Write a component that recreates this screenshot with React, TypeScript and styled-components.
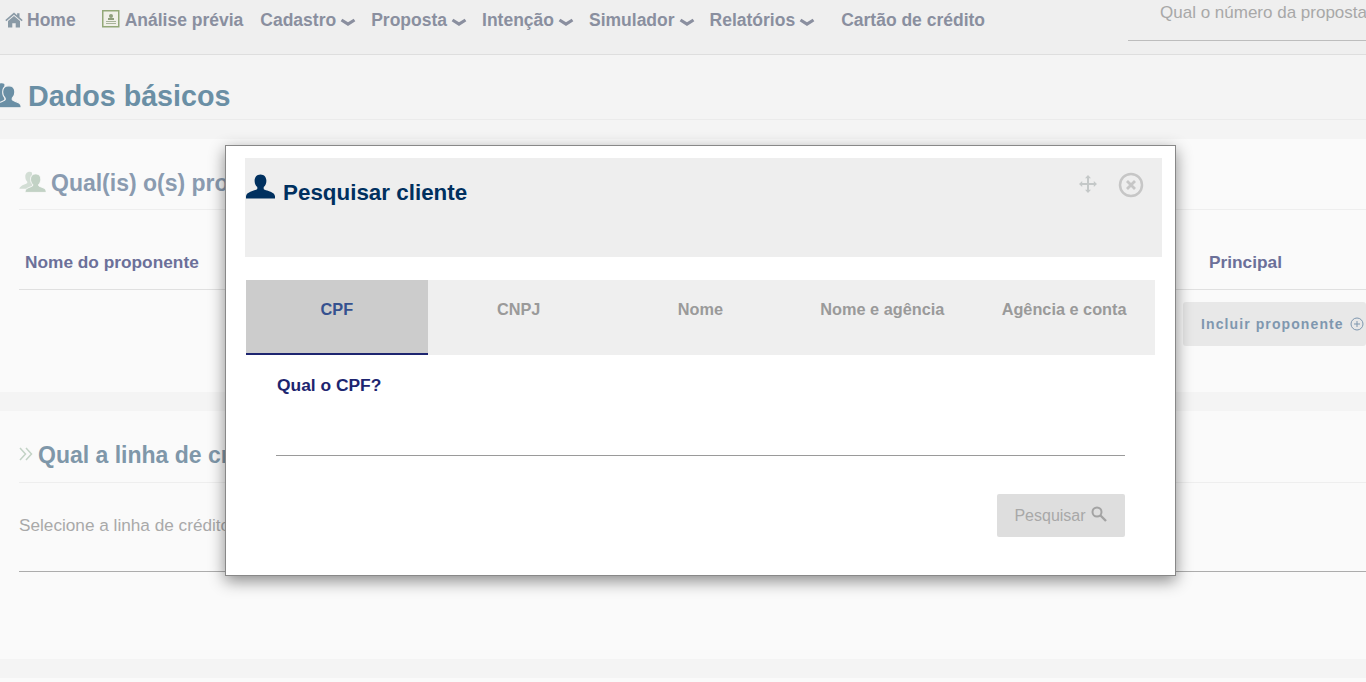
import styled, { createGlobalStyle } from 'styled-components';

const GlobalStyle = createGlobalStyle`
    html, body {
        margin: 0;
        padding: 0;
        height: 100%;
        overflow: hidden;
        background: #f4f4f4;
        font-family: "Liberation Sans", Arial, sans-serif;
    }
`;

const Page = styled.div`
    position: relative;
    width: 1366px;
    height: 682px;
    overflow: hidden;
`;

const Header = styled.header`
    display: flex;
    justify-content: space-between;
    height: 54px;
    background: #efefef;
    border-bottom: 1px solid #dedede;
`;

const Nav = styled.nav`
    display: flex;
    align-items: flex-start;
    padding: 10px 0 0 5px;
`;

const NavItem = styled.a<{ $left?: number }>`
    display: flex;
    align-items: center;
    height: 20px;
    margin-left: ${({ $left }) => $left ?? 15}px;
    color: #8a8f9f;
    font-size: 17.5px;
    font-weight: bold;
    white-space: nowrap;
    svg {
        flex: none;
    }
`;

const SearchBox = styled.div`
    box-sizing: border-box;
    width: 238px;
    height: 41px;
    padding: 4px 0 0 32px;
    border-bottom: 1px solid #bdbdbd;
    color: #a8a8a8;
    font-size: 17px;
    line-height: 18px;
    white-space: nowrap;
    overflow: hidden;
`;

const TitleBar = styled.div`
    display: flex;
    align-items: center;
    gap: 7px;
    box-sizing: border-box;
    height: 65px;
    margin-left: -11px;
    padding-top: 18px;
    border-bottom: 1px solid #ebebeb;
    color: #6a8fa5;
    font-size: 28.7px;
    font-weight: bold;
`;

const Card = styled.section<{ $height: number; $top: number }>`
    box-sizing: border-box;
    height: ${({ $height }) => $height}px;
    margin-top: ${({ $top }) => $top}px;
    padding-left: 19px;
    background: #fafafa;
`;

const CardTitle = styled.h2<{ $height: number; $color: string; $bottom: number }>`
    display: flex;
    align-items: flex-end;
    gap: 5px;
    box-sizing: border-box;
    height: ${({ $height }) => $height}px;
    margin: 0;
    padding-bottom: ${({ $bottom }) => $bottom}px;
    border-bottom: 1px solid #eeeeee;
    color: ${({ $color }) => $color};
    font-size: 23px;
    font-weight: bold;
    line-height: 26px;
    white-space: nowrap;
`;

const TableHead = styled.div`
    display: flex;
    justify-content: space-between;
    align-items: center;
    box-sizing: border-box;
    height: 80px;
    padding: 26px 84px 0 6px;
    border-bottom: 1px solid #e0e0e0;
    color: #6c7099;
    font-size: 17.3px;
    font-weight: bold;
`;

const ActionRow = styled.div`
    display: flex;
    justify-content: flex-end;
    padding-top: 12px;
`;

const IncludeButton = styled.div`
    display: flex;
    align-items: center;
    gap: 6px;
    box-sizing: border-box;
    width: 183px;
    height: 44px;
    padding-left: 18px;
    border-radius: 3px;
    background: #e8e8e8;
    color: #7f97af;
    font-size: 14px;
    font-weight: bold;
    letter-spacing: 1.1px;
    white-space: nowrap;
`;

const SelectField = styled.div`
    box-sizing: border-box;
    height: 89px;
    padding-top: 33px;
    border-bottom: 1px solid #acacac;
    color: #a9a9a9;
    font-size: 17.2px;
    line-height: 18px;
`;

const Modal = styled.div`
    position: absolute;
    left: 225px;
    top: 145px;
    box-sizing: border-box;
    width: 951px;
    height: 431px;
    padding: 12px 13px 0 19px;
    border: 1px solid #888888;
    background: #ffffff;
    box-shadow: 0 5px 15px rgba(0, 0, 0, 0.45);
`;

const ModalHeader = styled.div`
    display: flex;
    justify-content: space-between;
    align-items: flex-start;
    box-sizing: border-box;
    height: 99px;
    padding: 14px 18px 0 1px;
    background: #eeeeee;
`;

const ModalTitle = styled.h1`
    display: flex;
    align-items: flex-start;
    gap: 8px;
    margin: 0;
    padding-top: 2px;
    color: #00305f;
    font-size: 22.4px;
    font-weight: bold;
`;

const ModalTitleText = styled.span`
    margin-top: 6px;
`;

const ModalTools = styled.div`
    display: flex;
    align-items: flex-start;
    gap: 20px;
`;

const Tabs = styled.div`
    display: flex;
    width: 909px;
    margin: 23px 0 0 1px;
    background: #efefef;
`;

const Tab = styled.div<{ $active?: boolean }>`
    box-sizing: border-box;
    flex: 1;
    height: 75px;
    padding-top: 20px;
    border-bottom: 2px solid ${({ $active }) => ($active ? '#1d2570' : 'transparent')};
    background: ${({ $active }) => ($active ? '#cccccc' : 'transparent')};
    color: ${({ $active }) => ($active ? '#35518f' : '#9a9a9a')};
    font-size: 16.3px;
    font-weight: bold;
    line-height: 18px;
    text-align: center;
`;

const FieldLabel = styled.label`
    display: block;
    margin: 21px 0 0 32px;
    color: #1d2570;
    font-size: 17.4px;
    font-weight: bold;
    line-height: 18px;
`;

const FieldLine = styled.div`
    width: 849px;
    height: 1px;
    margin: 61px 0 0 31px;
    background: #9a9a9a;
`;

const ModalFooter = styled.div`
    display: flex;
    justify-content: flex-end;
    width: 880px;
    margin-top: 38px;
`;

const SearchButton = styled.div`
    display: flex;
    align-items: center;
    justify-content: center;
    gap: 5px;
    width: 128px;
    height: 43px;
    border-radius: 2px;
    background: #dedede;
    color: #a8a8a8;
    font-size: 16px;
`;

const PERSON =
    'M14.500 0.500c-3.800 0-5.900 2.900-5.900 6.300 0 2.700 1.100 5 2.700 6.300v1.900c-.4 1-6 2-8.600 3.700C.7 19.700-.1 21.100-.3 24.500h29.600c-.2-3.400-1-4.800-3-5.800-2.600-1.700-8.200-2.700-8.600-3.700v-1.900c1.600-1.300 2.700-3.600 2.700-6.300 0-3.400-2.100-6.300-5.900-6.300z';

const PersonIcon = ({ color }: { color: string }) => (
    <svg width="29" height="25" viewBox="0 0 29 25" fill={color} style={{ flex: 'none' }}>
        <path d={PERSON} />
    </svg>
);

const PeopleIcon = ({ size, back, front, edge }: { size: number; back: string; front: string; edge?: string }) => (
    <svg width={size} height={size} viewBox="0 0 30 26" style={{ flex: 'none' }}>
        <path
            fill={back}
            d="M12 1c-3.400 0-5 2.500-5 5.600 0 2.400.9 4.400 2.200 5.600v1.400c-.4.9-4.500 1.800-6.500 3.300C1.400 17.800.6 19 .4 20h14V1.800C13.700 1.300 12.900 1 12 1z"
        />
        <path
            fill={front}
            stroke={edge}
            d="M18 3.500c-3.400 0-5.200 2.600-5.200 5.800 0 2.400.9 4.600 2.400 5.800v1.500c-.4.900-5 1.900-6.800 3.300-1.100.9-1.600 2.300-1.600 4.100h23.400c0-1.800-.5-3.200-1.600-4.100-1.800-1.400-6.400-2.400-6.800-3.300v-1.500c1.500-1.200 2.400-3.400 2.400-5.800 0-3.200-1.800-5.800-5.200-5.800z"
        />
    </svg>
);

const HomeIcon = () => (
    <svg width="18" height="16" viewBox="0 0 18 16" fill="#8a9aa6" style={{ marginRight: 4 }}>
        <path d="M9 0.500 0.300 8l1 1.200L9 2.700l7.700 6.500 1-1.200L14.500 5.200V1.200h-2.400v2L9 .5z" />
        <path d="M9 4 3 9v6.500h4.300v-4.300h3.400v4.300H15V9L9 4z" />
    </svg>
);

const ReportIcon = () => (
    <svg width="18" height="18" viewBox="0 0 18 18" style={{ marginRight: 5, marginTop: -3 }}>
        <rect x="0.750" y="0.750" width="16" height="16" fill="#f0f0e8" stroke="#93a878" strokeWidth="1.500" />
        <circle cx="9" cy="6" r="2" fill="#8f9f7c" />
        <rect x="6" y="8" width="6" height="2" fill="#8f9f7c" />
        <rect x="4" y="11" width="10" height="1" fill="#a8b39a" />
        <rect x="4" y="13" width="10" height="1" fill="#a8b39a" />
    </svg>
);

const Chevron = () => (
    <svg width="16" height="9" viewBox="0 0 16 9" style={{ marginLeft: 4, marginTop: 5 }}>
        <path d="M1.500 2l6.500 4 6.500-4" fill="none" stroke="#8a8f9f" strokeWidth="3.200" />
    </svg>
);

const DoubleChevron = () => (
    <svg width="14" height="16" viewBox="0 0 14 16" fill="none" stroke="#c3d3c6" strokeWidth="1.500" style={{ marginBottom: 6 }}>
        <path d="M1 2l5.500 6L1 14M7 2l5.500 6L7 14" />
    </svg>
);

const MoveIcon = () => (
    <svg width="20" height="20" viewBox="0 0 20 20" fill="#c4c8c8" style={{ marginTop: 2 }}>
        <path d="M10 1l3 3.200h-2v4.800h4.800v-2l3.200 3-3.200 3v-2H11v4.800h2L10 19l-3-3.200h2V11H4.200v2L1 10l3.200-3v2H9V4.200H7L10 1z" />
    </svg>
);

const CloseIcon = () => (
    <svg width="26" height="26" viewBox="0 0 26 26" fill="none" stroke="#c6c6c6">
        <circle cx="13" cy="13" r="11" strokeWidth="2.500" />
        <path d="M9 9l8 8M17 9l-8 8" strokeWidth="2.800" />
    </svg>
);

const PlusCircle = () => (
    <svg width="14" height="14" viewBox="0 0 14 14" fill="none" stroke="#7f97af" style={{ flex: 'none' }}>
        <circle cx="7" cy="7" r="6" />
        <path d="M7 4v6M4 7h6" />
    </svg>
);

const Magnifier = () => (
    <svg width="17" height="16" viewBox="0 0 17 16" fill="none" stroke="#a3a3a3" style={{ marginTop: -3 }}>
        <circle cx="6" cy="6" r="4.500" strokeWidth="2" />
        <path d="M9.500 9.500l5.500 5.500" strokeWidth="2.400" />
    </svg>
);

const menus = [
    { label: 'Cadastro', left: 17 },
    { label: 'Proposta', left: 15 },
    { label: 'Intenção', left: 15 },
    { label: 'Simulador', left: 15 },
    { label: 'Relatórios', left: 15 },
];

const tabs = ['CPF', 'CNPJ', 'Nome', 'Nome e agência', 'Agência e conta'];

function App() {
    return (
        <Page>
            <GlobalStyle />
            <Header>
                <Nav>
                    <NavItem $left={0}>
                        <HomeIcon />
                        Home
                    </NavItem>
                    <NavItem $left={26}>
                        <ReportIcon />
                        Análise prévia
                    </NavItem>
                    {menus.map((menu) => (
                        <NavItem key={menu.label} $left={menu.left}>
                            {menu.label}
                            <Chevron />
                        </NavItem>
                    ))}
                    <NavItem $left={26}>Cartão de crédito</NavItem>
                </Nav>
                <SearchBox>Qual o número da proposta?</SearchBox>
            </Header>

            <TitleBar>
                <PeopleIcon size={32} back="#6a8fa5" front="#6a8fa5" edge="#f4f4f4" />
                Dados básicos
            </TitleBar>

            <Card $height={253} $top={19}>
                <CardTitle $height={71} $bottom={13} $color="#8a9bb0">
                    <PeopleIcon size={27} back="#d3ded5" front="#c2d2c5" edge="#fafafa" />
                    Qual(is) o(s) proponente(s)?
                </CardTitle>
                <TableHead>
                    <span>Nome do proponente</span>
                    <span>Principal</span>
                </TableHead>
                <ActionRow>
                    <IncludeButton>
                        Incluir proponente
                        <PlusCircle />
                    </IncludeButton>
                </ActionRow>
            </Card>

            <Card $height={248} $top={19}>
                <CardTitle $height={72} $bottom={14} $color="#7f97a9">
                    <DoubleChevron />
                    Qual a linha de crédito?
                </CardTitle>
                <SelectField>Selecione a linha de crédito</SelectField>
            </Card>

            <Card $height={30} $top={19} />

            <Modal>
                <ModalHeader>
                    <ModalTitle>
                        <PersonIcon color="#00305f" />
                        <ModalTitleText>Pesquisar cliente</ModalTitleText>
                    </ModalTitle>
                    <ModalTools>
                        <MoveIcon />
                        <CloseIcon />
                    </ModalTools>
                </ModalHeader>
                <Tabs>
                    {tabs.map((tab, index) => (
                        <Tab key={tab} $active={index === 0}>
                            {tab}
                        </Tab>
                    ))}
                </Tabs>
                <FieldLabel>Qual o CPF?</FieldLabel>
                <FieldLine />
                <ModalFooter>
                    <SearchButton>
                        Pesquisar
                        <Magnifier />
                    </SearchButton>
                </ModalFooter>
            </Modal>
        </Page>
    );
}

export default App;
